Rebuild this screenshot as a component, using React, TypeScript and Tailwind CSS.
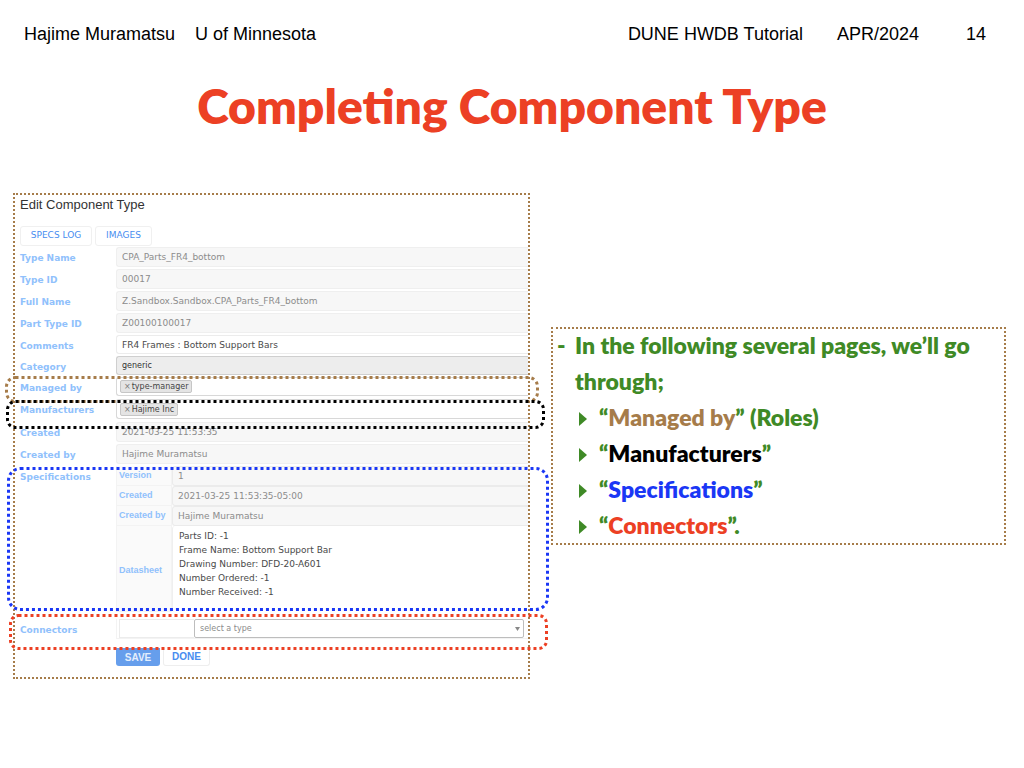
import type { ReactNode } from "react";

function Outline({ className, radius }: { className: string; radius: number }) {
  return (
    <svg aria-hidden="true" className={`pointer-events-none absolute overflow-visible ${className}`}>
      <rect
        x="1.5"
        y="1.5"
        rx={radius}
        className="h-[calc(100%-3px)] w-[calc(100%-3px)]"
        fill="none"
        stroke="currentColor"
        strokeWidth="3"
        strokeDasharray="3 3"
      />
    </svg>
  );
}

const labelClass = "w-24 shrink-0 pt-[3px] text-[9px] leading-4 font-bold text-[#90c1fc]";

function Row({ id, label, height, children }: { id: string; label: string; height: string; children: ReactNode }) {
  return (
    <div className={`relative flex pl-[5px] ${height}`}>
      <label htmlFor={id} className={labelClass}>
        {label}
      </label>
      {children}
    </div>
  );
}

const fieldClass =
  "h-5 min-w-0 flex-1 rounded-l-[3px] border border-r-0 border-[#efefef] bg-[#f7f7f7] px-[5px] text-[9px] text-[#8c8c8c]";

function ReadOnlyField({ id, label, value }: { id: string; label: string; value: string }) {
  return (
    <Row id={id} label={label} height="h-[22px]">
      <input id={id} readOnly defaultValue={value} className={fieldClass} />
    </Row>
  );
}

function TagBox({ id, tag, height, className }: { id: string; tag: string; height: string; className: string }) {
  return (
    <div className={`min-w-0 flex-1 rounded-l-[3px] border border-r-0 border-[#d8d8d8] bg-white pl-[3px] ${height} ${className}`}>
      <button
        id={id}
        type="button"
        className="flex h-[13px] items-center gap-px rounded-[2px] border border-[#c6c6c6] bg-[#e4e4e4] px-[3px] text-[8px] leading-none text-[#444]"
      >
        <span className="text-[#777]">×</span>
        {tag}
      </button>
    </div>
  );
}

const specRows = [
  { id: "version", label: "Version", value: "1" },
  { id: "spec-created", label: "Created", value: "2021-03-25 11:53:35-05:00" },
  { id: "spec-created-by", label: "Created by", value: "Hajime Muramatsu" },
];

const datasheet = `Parts ID: -1
Frame Name: Bottom Support Bar
Drawing Number: DFD-20-A601
Number Ordered: -1
Number Received: -1`;

const specHeadClass =
  "w-[56px] border-r border-b border-l border-[#f3f3f3] bg-[#fafafa] pl-[2px] text-left align-middle font-['Liberation_Sans',sans-serif] text-[9px] leading-none font-bold whitespace-nowrap text-[#90c1fc]";

function EditPanel() {
  return (
    <form className="border-2 border-dotted border-[#a67c4a] pb-[11px] font-['DejaVu_Sans',sans-serif]">
      <h2 className="h-[31px] pt-[2px] pl-[5px] font-['Liberation_Sans',sans-serif] text-[13px] leading-4 text-[#333]">
        Edit Component Type
      </h2>
      <div className="flex h-[21px] gap-[3px] pl-[5px] text-[9px] text-[#478df0]">
        <button type="button" className="h-5 w-[72px] rounded-[3px] border border-[#f0f0f0]">
          SPECS LOG
        </button>
        <button type="button" className="h-5 w-[57px] rounded-[3px] border border-[#f0f0f0]">
          IMAGES
        </button>
      </div>

      <ReadOnlyField id="type-name" label="Type Name" value="CPA_Parts_FR4_bottom" />
      <ReadOnlyField id="type-id" label="Type ID" value="00017" />
      <ReadOnlyField id="full-name" label="Full Name" value="Z.Sandbox.Sandbox.CPA_Parts_FR4_bottom" />
      <ReadOnlyField id="part-type-id" label="Part Type ID" value="Z00100100017" />
      <Row id="comments" label="Comments" height="h-[21px]">
        <input
          id="comments"
          defaultValue="FR4 Frames : Bottom Support Bars"
          className="h-[19px] min-w-0 flex-1 rounded-l-[3px] border border-r-0 border-[#ececec] bg-white px-[5px] text-[9px] text-[#4a4a4a]"
        />
      </Row>
      <Row id="category" label="Category" height="h-[21px]">
        <select
          id="category"
          className="h-[19px] min-w-0 flex-1 appearance-none rounded-l-[3px] border border-r-0 border-[#cfcfcf] bg-[#ededed] px-[5px] text-[8px] text-[#333]"
        >
          <option>generic</option>
        </select>
      </Row>
      <Row id="managed-by" label="Managed by" height="h-[22px]">
        <TagBox id="managed-by" tag="type-manager" height="h-[19px]" className="pt-[2px]" />
        <Outline radius={9} className="-top-px -left-[10px] h-[27px] w-[calc(100%+21px)] text-[#a67c4a]" />
      </Row>
      <Row id="manufacturers" label="Manufacturers" height="h-[23px]">
        <TagBox id="manufacturers" tag="Hajime Inc" height="h-5" className="pt-[3px]" />
        <Outline radius={8} className="top-px -left-[9px] z-10 h-[29px] w-[calc(100%+26px)] text-black" />
      </Row>
      <ReadOnlyField id="created" label="Created" value="2021-03-25 11:53:35" />
      <ReadOnlyField id="created-by" label="Created by" value="Hajime Muramatsu" />

      <div className="relative flex h-[146px] pl-[5px]">
        <div className={labelClass}>Specifications</div>
        <table className="min-w-0 flex-1 border-separate border-spacing-0">
          <tbody>
            {specRows.map((row) => (
              <tr key={row.id} className="h-5">
                <th className={specHeadClass}>
                  <label htmlFor={row.id}>{row.label}</label>
                </th>
                <td className="p-0">
                  <input
                    id={row.id}
                    readOnly
                    defaultValue={row.value}
                    className="block h-5 w-full rounded-l-[3px] border border-r-0 border-[#ebebeb] bg-[#f7f7f7] px-[5px] text-[9px] text-[#8c8c8c]"
                  />
                </td>
              </tr>
            ))}
            <tr>
              <th className={`${specHeadClass} pt-1`}>
                <label htmlFor="datasheet">Datasheet</label>
              </th>
              <td className="p-0">
                <textarea
                  id="datasheet"
                  defaultValue={datasheet}
                  className="block h-[86px] w-full resize-none overflow-hidden rounded-l-[3px] border-l border-[#efefef] bg-white px-[6px] pt-[3px] text-[9px] leading-[14px] text-[#4a4a4a]"
                />
              </td>
            </tr>
          </tbody>
        </table>
        <Outline radius={12} className="top-px -left-[8px] h-[144px] w-[calc(100%+29px)] text-[#1a37f5]" />
      </div>

      <div className="relative flex h-9 pt-[7px] pl-[5px]">
        <label htmlFor="connector-type" className={labelClass}>
          Connectors
        </label>
        <div className="flex h-5 min-w-0 flex-1 border-b border-l border-[#f3f3f3] pr-1 pl-[2px]">
          <input aria-label="Connector name" className="h-[19px] w-[75px] border border-r-0 border-[#ececec]" />
          <div className="relative min-w-0 flex-1">
            <select
              id="connector-type"
              className="block h-[19px] w-full appearance-none rounded-[2px] border border-[#bdbdbd] bg-white px-[5px] text-[8px] text-[#8c8c8c]"
            >
              <option>select a type</option>
            </select>
            <svg aria-hidden="true" viewBox="0 0 5 4" className="absolute top-2 right-1 h-1 w-[5px] fill-[#888]">
              <path d="M0 0h5L2.5 4z" />
            </svg>
          </div>
        </div>
        <Outline radius={8} className="top-[2px] -left-[6px] h-9 w-[calc(100%+26px)] text-[#ec4024]" />
      </div>

      <div className="flex gap-[3px] pl-[101px] font-['Liberation_Sans',sans-serif] text-[10px] font-bold">
        <button type="button" className="h-[18px] w-11 rounded-b-[3px] bg-[#669eec] text-[#e4eefc]">
          SAVE
        </button>
        <button type="button" className="h-[18px] w-[47px] rounded-[3px] border border-t-0 border-[#eeeeee] text-[#478df0]">
          DONE
        </button>
      </div>
    </form>
  );
}

const topics = [
  { name: "Managed by", after: "” (Roles)", color: "text-[#a67c4a]" },
  { name: "Manufacturers", after: "”", color: "text-black" },
  { name: "Specifications", after: "”", color: "text-[#1a37f5]" },
  { name: "Connectors", after: "”.", color: "text-[#ec4024]" },
];

export default function App() {
  return (
    <div className="min-h-screen bg-white">
      <header className="flex justify-between pt-6 pr-[38px] pl-6 font-['Liberation_Sans',sans-serif] text-lg leading-5 text-black">
        <div className="flex gap-5">
          <span>Hajime Muramatsu</span>
          <span>U of Minnesota</span>
        </div>
        <div className="flex">
          <span>DUNE HWDB Tutorial</span>
          <span className="pl-[34px]">APR/2024</span>
          <span className="pl-[47px]">14</span>
        </div>
      </header>
      <h1 className="pt-8 text-center font-['Lato',sans-serif] text-[48px] leading-[60px] font-extrabold text-[#ec4024]">
        Completing Component Type
      </h1>
      <main className="grid grid-cols-[517fr_455fr] items-start gap-[21px] pt-[57px] pr-[18px] pl-[13px]">
        <EditPanel />
        <section className="mt-[134px] border-2 border-dotted border-[#a67c4a] pl-1 font-['Lato',sans-serif] text-[23px] leading-9 font-extrabold text-[#3f8a26]">
          <div className="-mt-[2px] flex">
            <span className="w-[18px] shrink-0">-</span>
            <p>In the following several pages, we’ll go through;</p>
          </div>
          <ul className="pl-[22px]">
            {topics.map((topic) => (
              <li key={topic.name} className="flex items-center gap-3">
                <svg aria-hidden="true" viewBox="0 0 8 14" className="mt-1 h-[14px] w-2 fill-[#3f8a26]">
                  <path d="M0 0l8 7-8 7z" />
                </svg>
                <span>
                  “<span className={topic.color}>{topic.name}</span>
                  {topic.after}
                </span>
              </li>
            ))}
          </ul>
        </section>
      </main>
    </div>
  );
}
